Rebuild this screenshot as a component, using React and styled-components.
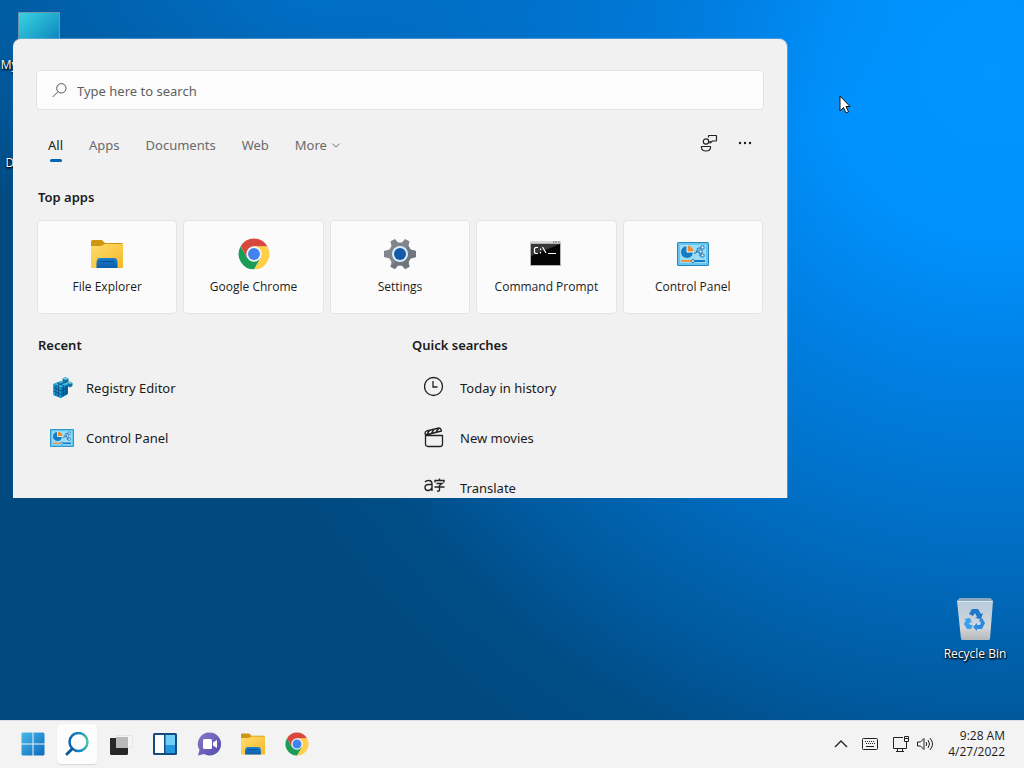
import React, { useState } from "react";
import styled, { createGlobalStyle } from "styled-components";

const GlobalStyle = createGlobalStyle`
  * {
    box-sizing: border-box;
  }

  body {
    margin: 0;
    overflow: hidden;
    font-family: "Noto Sans", "Open Sans", sans-serif;
    font-size: 13px;
    line-height: 20px;
    color: #1b1b1b;
  }

  button {
    margin: 0;
    padding: 0;
    border: 0;
    background: none;
    font: inherit;
    color: inherit;
    cursor: default;
  }

  svg {
    display: block;
    flex: none;
  }
`;

const smallFont = `"Open Sans", "Noto Sans", sans-serif`;

const Screen = styled.div`
  display: flex;
  flex-direction: column;
  min-height: 100vh;
`;

const Desktop = styled.main`
  position: relative;
  flex: 1;
  overflow: hidden;
  background:
    radial-gradient(
      ellipse 60% 32% at 30% 0%,
      rgba(0, 116, 208, 0.85),
      rgba(0, 116, 208, 0)
    ),
    radial-gradient(
      ellipse 92% 130% at 97% 10%,
      #0095ff 0%,
      #0091fc 18%,
      #007fe2 33%,
      #0073cb 46%,
      #0065b3 58%,
      #005a9e 68%,
      #004d86 78%,
      #004a80 86%
    );
`;

const Shortcut = styled.button`
  position: absolute;
  left: ${(p) => p.$left};
  right: ${(p) => p.$right};
  top: ${(p) => p.$top};
  display: flex;
  flex-direction: column;
  align-items: center;
  gap: 3px;
  width: 80px;
  font-family: ${smallFont};
  font-size: 12px;
  color: #fff;
  text-shadow: 1px 1px 2px #000, 0 1px 2px #000;
  white-space: nowrap;
`;

const Pointer = styled.svg`
  position: absolute;
  left: 839px;
  top: 95px;
`;

const SearchWindow = styled.section`
  position: absolute;
  left: 13px;
  top: 39px;
  width: min(774px, calc(100% - 26px));
  max-height: 459px;
  padding: 31px 23px 0;
  overflow: hidden;
  background: #f1f1f1;
  border-radius: 8px 8px 0 0;
  box-shadow: 0 -1px 1px rgba(150, 185, 220, 0.5), 1px 0 0 rgba(150, 185, 220, 0.5);
`;

const SearchBox = styled.label`
  display: flex;
  align-items: center;
  gap: 10px;
  height: 40px;
  padding: 0 15px;
  background: #fcfcfc;
  border: 1px solid #e2e2e2;
  border-radius: 4px;

  input {
    flex: 1;
    padding: 2px 0 0;
    border: 0;
    outline: 0;
    background: none;
    font: inherit;
  }

  input::placeholder {
    color: #5f5f5f;
    opacity: 1;
  }
`;

const Toolbar = styled.div`
  display: flex;
  align-items: center;
  justify-content: space-between;
  height: 54px;
  margin-top: 8px;
  padding: 0 9px 0 12px;
`;

const Tabs = styled.nav`
  display: flex;
  gap: 26px;
`;

const Tab = styled.button`
  display: flex;
  flex-direction: column;
  align-items: center;
  gap: 4px;
  padding-top: 7px;
  color: ${(p) => (p.$active ? "#1b1b1b" : "#6a6a6a")};

  span {
    display: flex;
    align-items: center;
    gap: 4px;
  }

  &::after {
    content: "";
    width: 12px;
    height: 3px;
    border-radius: 2px;
    background: ${(p) => (p.$active ? "#0067b8" : "transparent")};
  }
`;

const Actions = styled.div`
  display: flex;
  align-items: center;
  gap: 16px;
  padding-bottom: 4px;
`;

const Heading = styled.h2`
  margin: 0;
  padding-left: 1px;
  font-size: 13px;
  line-height: 20px;
  font-weight: 600;
`;

const TopApps = styled.section`
  padding: 15px 1px 0;
`;

const Cards = styled.div`
  display: grid;
  grid-template-columns: repeat(5, 1fr);
  gap: 6px;
  margin-top: 13px;
`;

const Card = styled.button`
  display: flex;
  flex-direction: column;
  align-items: center;
  gap: 7px;
  height: 94px;
  padding-top: 17px;
  font-family: ${smallFont};
  font-size: 12px;
  background: #fbfbfb;
  border: 1px solid #e4e4e4;
  border-radius: 4px;
`;

const Columns = styled.div`
  display: grid;
  grid-template-columns: 1fr 1fr;
  gap: 22px;
  padding: 21px 1px 0;
`;

const List = styled.div`
  display: flex;
  flex-direction: column;
  gap: 10px;
  padding: 13px 13px 10px;
`;

const ListRow = styled.button`
  display: flex;
  align-items: center;
  gap: 12px;
  height: 40px;
  text-align: left;
`;

const Taskbar = styled.footer`
  display: flex;
  align-items: center;
  justify-content: space-between;
  height: 48px;
  padding: 0 19px 2px 13px;
  background: #f3f3f3;
  border-top: 1px solid #d9e0e8;
`;

const TaskGroup = styled.div`
  display: flex;
  align-items: center;
  gap: 4px;
`;

const TaskButton = styled.button`
  display: grid;
  place-items: center;
  width: 40px;
  height: 40px;
  border-radius: 4px;
  background: ${(p) => (p.$active ? "#fdfdfd" : "none")};
  box-shadow: ${(p) => (p.$active ? "0 1px 1px #d8d8d8" : "none")};
`;

const Tray = styled.div`
  display: flex;
  align-items: center;
  gap: 14px;
`;

const TrayPair = styled.button`
  display: flex;
  gap: 6px;
`;

const Clock = styled.button`
  font-family: ${smallFont};
  font-size: 12px;
  line-height: 16px;
  text-align: right;
`;

function FolderIcon({ size }) {
  return (
    <svg width={size} height={size} viewBox="0 0 32 32" aria-hidden="true">
      <defs>
        <linearGradient id={`folder${size}`} x1="0" y1="0" x2="1" y2="1">
          <stop offset="0" stopColor="#ffdc6e" />
          <stop offset="1" stopColor="#f4b928" />
        </linearGradient>
        <linearGradient id={`pocket${size}`} x1="0" y1="0" x2="0" y2="1">
          <stop offset="0" stopColor="#1a7fd0" />
          <stop offset="1" stopColor="#0c5ca8" />
        </linearGradient>
      </defs>
      <path d="M0 3.500Q0 2 1.500 2H11l3 3h16.500Q32 5 32 6.500V14H0z" fill="#cf960f" />
      <path d="M0 8h9.500q1.500 0 2.500-1t2.500-1H32v24H0z" fill={`url(#folder${size})`} />
      <path d="M5.500 30v-5q0-5 3.500-5h14q3.500 0 3.500 5v5z" fill={`url(#pocket${size})`} />
      <path d="M9 23.500h14" stroke="#0a4f93" strokeWidth="1.200" />
    </svg>
  );
}

function ChromeIcon({ size }) {
  return (
    <svg width={size} height={size} viewBox="-1 -1 50 50" aria-hidden="true">
      <path d="M24 12h20.8A24 24 0 0 1 24 48l10.400-18z" fill="#ffcf48" />
      <path d="M13.600 30 3.200 12A24 24 0 0 0 24 48l10.400-18z" fill="#1a9b57" />
      <path d="M3.200 12 13.600 30 24 12h20.800A24 24 0 0 0 3.200 12z" fill="#d9483c" />
      <circle cx="24" cy="24" r="12" fill="#f5f5f5" />
      <circle cx="24" cy="24" r="9.300" fill="#4383ef" />
    </svg>
  );
}

function SettingsIcon() {
  return (
    <svg width="32" height="32" viewBox="0 0 32 32" aria-hidden="true">
      <path
        d="M11 1 14 4.500h4L21 1l4.500 2.300L24.500 8l2 3.500L32 13v6l-5.500 1.500-2 3.500 1 4.700L21 31l-3-3.500h-4L11 31l-4.500-2.300 1-4.700-2-3.500L0 19v-6l5.500-1.500 2-3.500-1-4.700z"
        fill="#81868c"
      />
      <path d="M24.500 8l2 3.500L32 13v6l-5.500 1.500-2 3.500 1 4.700L21 31l-3-3.500h-4L11 31l-4.500-2.300z" fill="#70767d" />
      <circle cx="16" cy="16" r="8" fill="#d9ecfb" />
      <circle cx="16" cy="16" r="6" fill="#1458a8" />
    </svg>
  );
}

function CommandIcon() {
  return (
    <svg width="32" height="32" viewBox="0 0 32 32" aria-hidden="true">
      <path d="M0 3h31v25H0z" fill="#b3b3b3" />
      <path d="M1 6h29v21H1z" fill="#050505" />
      <path d="M1 6h29L1 18z" fill="#383838" />
      <path d="M0 3h31v2H0z" fill="#d7d7d7" />
      <path d="M23 4h1.500m1 0H27m1 0h1.500" stroke="#555" />
      <path d="M8 9.500H5.500l-1 1v4l1 1H8M10.500 10.500V12m0 2v1.500M12.500 9l3.500 6M18 15.500h8" fill="none" stroke="#fff" strokeWidth="1.200" />
    </svg>
  );
}

function ControlPanelIcon({ size }) {
  return (
    <svg width={size} height={size} viewBox="0 0 32 32" aria-hidden="true">
      <rect y="4" width="32" height="24" rx="1.500" fill="#2688bf" />
      <rect x="1" y="5" width="30" height="22" rx="1" fill="#62c6ee" />
      <rect x="3" y="7" width="26" height="18" fill="#9bddf6" />
      <circle cx="10" cy="14" r="6" fill="#147bc4" />
      <path d="M10 14V7.500A6.500 6.500 0 0 1 16.500 14z" fill="#f28b28" />
      <path d="M10 7v7h7" fill="none" stroke="#fff" />
      <path d="M17 15h2l2-5h3m-4 4h3v4h3" fill="none" stroke="#176db0" />
      <path d="M24 8h3v3h-3zm-2 4h3v3h-3zm2 4h3v3h-3z" fill="#edfaff" stroke="#2879bd" />
      <path d="M4 23h10" stroke="#ed9943" strokeWidth="2" />
      <path d="M17 23h11" stroke="#1679c5" strokeWidth="2" />
      <circle cx="16" cy="23" r="1.500" fill="#fff" stroke="#1679c5" />
    </svg>
  );
}

function RegistryIcon() {
  return (
    <svg width="24" height="24" viewBox="0 0 24 24" aria-hidden="true">
      <path d="M3.500 8 11 5l7 3.500V18l-7 4-7.500-3z" fill="#0874b1" />
      <path d="M3.500 8 11 5l7 3.500-7 3z" fill="#3db4dd" />
      <path d="M3.500 8 11 11.500V22l-7.500-3z" fill="#149ad2" />
      <path d="M6 9v11m2.500-10v11M13.500 10.500V20M16 9.500V19M3.500 11.500l7.500 3.500 7-3.500M3.500 15l7.500 3.500 7-3.500M7 6.500l7 3.500M14.500 6.500 7.500 9.500" fill="none" stroke="#064c80" strokeWidth=".9" />
      <path d="m12.500 2.500 3-1.500 3 1.500V6l-3 1.500-3-1.500zM17.500 6.500l2.500-1 2.500 1.500v3L20 11.500l-2.500-1.500z" fill="#11769f" />
      <path d="m12.500 2.500 3-1.500 3 1.500L15.500 4zM17.500 6.500l2.500-1 2.500 1.500L20 8z" fill="#6fcfe4" />
    </svg>
  );
}

function SearchIcon({ size, gradient }) {
  return (
    <svg width={size} height={size} viewBox="0 0 24 24" fill="none" aria-hidden="true">
      {gradient && (
        <defs>
          <linearGradient id="searchRing" gradientUnits="userSpaceOnUse" x1="5" y1="9" x2="23" y2="8">
            <stop stopColor="#0b66ad" />
            <stop offset=".6" stopColor="#158cc5" />
            <stop offset="1" stopColor="#4ccb9a" />
          </linearGradient>
        </defs>
      )}
      <circle
        cx={gradient ? 13.5 : 15}
        cy={gradient ? 10 : 8.5}
        r={gradient ? 9 : 7.5}
        stroke={gradient ? "url(#searchRing)" : "#555"}
        strokeWidth={gradient ? 2.5 : 1.6}
      />
      <path
        d={gradient ? "M7 17l-5 5" : "M9.500 14 1.500 22"}
        stroke={gradient ? "#0c5c9c" : "#555"}
        strokeWidth={gradient ? 3 : 1.6}
        strokeLinecap="round"
      />
    </svg>
  );
}

function FeedbackIcon() {
  return (
    <svg width="20" height="20" viewBox="0 0 20 20" fill="none" stroke="#222" strokeWidth="1.200" aria-hidden="true">
      <circle cx="7" cy="8.500" r="2.700" />
      <path d="M2.500 13.500h9v1q0 3.500-4.500 3.500t-4.500-3.500z" strokeLinejoin="round" />
      <path d="M9.500 4.500V3q0-.5.5-.5h7q.5 0 .5.500v4.500q0 .5-.5.500h-3.500L11 10V8" strokeLinejoin="round" />
    </svg>
  );
}

function MoreIcon() {
  return (
    <svg width="20" height="20" viewBox="0 0 20 20" fill="#1b1b1b" aria-hidden="true">
      <circle cx="5" cy="10" r="1.200" />
      <circle cx="10" cy="10" r="1.200" />
      <circle cx="15" cy="10" r="1.200" />
    </svg>
  );
}

function HistoryIcon() {
  return (
    <svg width="24" height="24" viewBox="0 0 24 24" fill="none" stroke="#222" strokeWidth="1.300" aria-hidden="true">
      <circle cx="9.500" cy="10.500" r="9" />
      <path d="M9 5v6h4.500" />
    </svg>
  );
}

function MoviesIcon() {
  return (
    <svg width="24" height="24" viewBox="0 0 24 24" fill="none" stroke="#222" strokeWidth="1.300" strokeLinejoin="round" aria-hidden="true">
      <path d="M1.500 9.500h17V18q0 2.500-2.500 2.500H4q-2.500 0-2.500-2.500zM1.500 9 1 7q0-1.500 1.500-2L15 2q1.500 0 2 1.500l.5 1.500zM3 8l3-4M7.500 7l3-4.200M12 6l3-4" />
    </svg>
  );
}

function TranslateIcon() {
  return (
    <svg width="24" height="24" viewBox="0 0 24 24" fill="none" stroke="#222" strokeWidth="1.400" aria-hidden="true">
      <path d="M1 6q1-1.500 3.500-1.500Q8 4.500 8 8v7M8 8.500H4.500Q1 8.500 1 11.500T4 14.500q3 0 4-3" />
      <path d="M11 6.500v-2h9v2M15.500 2.500v2M12.500 7.500H18l-2.500 2v4.500q0 1.500-2.500 1M10.500 11h10" />
    </svg>
  );
}

function StartIcon() {
  return (
    <svg width="24" height="24" viewBox="0 0 24 24" aria-hidden="true">
      <defs>
        <linearGradient id="startTiles" gradientUnits="userSpaceOnUse" x1="0" y1="0" x2="24" y2="24">
          <stop stopColor="#4abbea" />
          <stop offset="1" stopColor="#0868bd" />
        </linearGradient>
      </defs>
      <path d="M2 .5h9.500v11H.5V2Q.5.500 2 .5zM12.500.5H22q1.500 0 1.500 1.500v9.500h-11zM.5 12.500h11v11H2Q.5 23.500.5 22zM12.500 12.500h11V22q0 1.500-1.500 1.500h-9.500z" fill="url(#startTiles)" />
    </svg>
  );
}

function TaskViewIcon() {
  return (
    <svg width="26" height="24" viewBox="0 0 26 24" aria-hidden="true">
      <rect x="7.500" y="3.500" width="17" height="12" rx="1" fill="#f5f5f5" stroke="#e6e6e6" />
      <rect x="2" y="5" width="18" height="18" rx="1.500" fill="#272727" />
      <path d="M2 5h6v-1h12v2H2z" fill="#f3f3f3" />
      <path d="M8 5h12v11H8z" fill="#b9b9b9" />
    </svg>
  );
}

function WidgetsIcon() {
  return (
    <svg width="26" height="24" viewBox="0 0 26 24" aria-hidden="true">
      <rect x="1" y="1" width="24" height="22" rx="1.500" fill="#134c80" />
      <path d="M3 3h9v18H3z" fill="#fbfdff" />
      <path d="M13.500 3H23v10h-9.500z" fill="#70cef7" />
      <path d="M13.500 13H23v8h-9.500z" fill="#2497e0" />
    </svg>
  );
}

function ChatIcon() {
  return (
    <svg width="24" height="24" viewBox="0 0 24 24" aria-hidden="true">
      <defs>
        <linearGradient id="chatBubble" x1="0" y1="0" x2="1" y2="1">
          <stop stopColor="#8a78c8" />
          <stop offset="1" stopColor="#514caf" />
        </linearGradient>
      </defs>
      <path d="M12.500.5A11.500 11.500 0 1 1 7 22L1 23.500 2.500 18A11.500 11.500 0 0 1 12.500.5z" fill="url(#chatBubble)" />
      <rect x="6" y="7" width="9" height="10" rx="1.500" fill="#fff" />
      <path d="M16 10.500 20 8v8l-4-2.500z" fill="#fff" />
    </svg>
  );
}

function RecycleIcon() {
  return (
    <svg width="40" height="44" viewBox="0 0 40 44" aria-hidden="true">
      <defs>
        <linearGradient id="bin" x1="0" y1="0" x2="0" y2="1">
          <stop stopColor="#b4c9dc" />
          <stop offset=".7" stopColor="#d3d7db" />
          <stop offset="1" stopColor="#b5b7ba" />
        </linearGradient>
      </defs>
      <path d="M2 4 5 1h30l3 3-3 38q0 1-2 1H8q-2 0-2-1z" fill="url(#bin)" />
      <path d="M2 4 5 1h30l3 3-2 1H4z" fill="#8ba6bd" />
      <path d="M2.500 4.500h35" stroke="#dce8f2" />
      <path d="m14 17 3-5h6l3 5 2-1-2 6-6-1 2-1-2-4-2 3z" fill="#1d78c9" />
      <path d="m27 21 3 5-3 6h-5v2l-4-4 4-4v2h3l1-2-2-3z" fill="#2a8be0" />
      <path d="M16 32h-4l-3-5 2-4-2-1 6-1 2 5-2-1-1 2 2 1h2z" fill="#3aa0ee" />
    </svg>
  );
}

function MonitorIcon() {
  return (
    <svg width="42" height="40" viewBox="0 0 42 40" aria-hidden="true">
      <defs>
        <linearGradient id="monitor" x1="0" y1="0" x2="1" y2="1">
          <stop stopColor="#38d5e2" />
          <stop offset="1" stopColor="#087db9" />
        </linearGradient>
      </defs>
      <path d="M.5.500h41v34H.5z" fill="url(#monitor)" stroke="#6f97ac" />
    </svg>
  );
}

function DriveIcon() {
  return (
    <svg width="42" height="40" viewBox="0 0 42 40" aria-hidden="true">
      <path d="M14 8h24v28H14z" fill="#6fb6e0" />
    </svg>
  );
}

function ChevronIcon({ up }) {
  return (
    <svg width={up ? 14 : 10} height={up ? 14 : 10} viewBox="0 0 14 14" fill="none" stroke={up ? "#222" : "#777"} strokeWidth="1.400" aria-hidden="true">
      <path d={up ? "m1 10 6-6 6 6" : "m2 5 5 5 5-5"} />
    </svg>
  );
}

function KeyboardIcon() {
  return (
    <svg width="16" height="12" viewBox="0 0 16 12" fill="none" stroke="#222" aria-hidden="true">
      <rect x=".5" y=".5" width="15" height="11" rx="1" />
      <path d="M3 3.500h10M4 5.500h9" strokeDasharray="1 1" />
      <path d="M4 8.500h8" />
    </svg>
  );
}

function NetworkIcon() {
  return (
    <svg width="18" height="18" viewBox="0 0 18 18" fill="none" stroke="#222" aria-hidden="true">
      <path d="M11 2.500H1.500v11h13V8M5.500 13.500v3m5-3v3M4 16.500h8" />
      <path d="M12.500 1.500h4v5h-4zM14.500 6.500v3M12.500 3.500h4" />
    </svg>
  );
}

function VolumeIcon() {
  return (
    <svg width="18" height="18" viewBox="0 0 18 18" fill="none" stroke="#222" aria-hidden="true">
      <path d="M1.500 7v4h3L8 14.500v-11L4.500 7z" strokeLinejoin="round" />
      <path d="M10 7q1.500 2 0 4M12 5q3 4 0 8M14 3q5 6 0 12" />
    </svg>
  );
}

const tabs = ["All", "Apps", "Documents", "Web", "More"];

const topApps = [
  { name: "File Explorer", icon: <FolderIcon size={32} /> },
  { name: "Google Chrome", icon: <ChromeIcon size={32} /> },
  { name: "Settings", icon: <SettingsIcon /> },
  { name: "Command Prompt", icon: <CommandIcon /> },
  { name: "Control Panel", icon: <ControlPanelIcon size={32} /> },
];

const recent = [
  { name: "Registry Editor", icon: <RegistryIcon /> },
  { name: "Control Panel", icon: <ControlPanelIcon size={24} /> },
];

const quickSearches = [
  { name: "Today in history", icon: <HistoryIcon /> },
  { name: "New movies", icon: <MoviesIcon /> },
  { name: "Translate", icon: <TranslateIcon /> },
];

const pinned = [
  { name: "Start", icon: <StartIcon /> },
  { name: "Search", icon: <SearchIcon size={24} gradient />, active: true },
  { name: "Task view", icon: <TaskViewIcon /> },
  { name: "Widgets", icon: <WidgetsIcon /> },
  { name: "Chat", icon: <ChatIcon /> },
  { name: "File Explorer", icon: <FolderIcon size={24} /> },
  { name: "Google Chrome", icon: <ChromeIcon size={24} /> },
];

function ResultList({ title, items }) {
  return (
    <section>
      <Heading>{title}</Heading>
      <List>
        {items.map((item) => (
          <ListRow key={item.name}>
            {item.icon}
            {item.name}
          </ListRow>
        ))}
      </List>
    </section>
  );
}

export default function App() {
  const [tab, setTab] = useState("All");
  const [query, setQuery] = useState("");

  return (
    <Screen>
      <GlobalStyle />
      <Desktop>
        <Shortcut $left="-1px" $top="12px">
          <MonitorIcon />
          My Computer
        </Shortcut>
        <Shortcut $left="-1px" $top="110px">
          <DriveIcon />
          Data Center
        </Shortcut>
        <Shortcut $right="9px" $top="597px">
          <RecycleIcon />
          Recycle Bin
        </Shortcut>

        <SearchWindow aria-label="Search">
          <SearchBox>
            <SearchIcon size={15} />
            <input
              type="text"
              aria-label="Search"
              placeholder="Type here to search"
              value={query}
              onChange={(e) => setQuery(e.target.value)}
            />
          </SearchBox>

          <Toolbar>
            <Tabs>
              {tabs.map((name) => (
                <Tab key={name} $active={tab === name} onClick={() => setTab(name)}>
                  <span>
                    {name}
                    {name === "More" && <ChevronIcon />}
                  </span>
                </Tab>
              ))}
            </Tabs>
            <Actions>
              <button aria-label="Feedback">
                <FeedbackIcon />
              </button>
              <button aria-label="Options">
                <MoreIcon />
              </button>
            </Actions>
          </Toolbar>

          <TopApps>
            <Heading>Top apps</Heading>
            <Cards>
              {topApps.map((app) => (
                <Card key={app.name}>
                  {app.icon}
                  {app.name}
                </Card>
              ))}
            </Cards>
          </TopApps>

          <Columns>
            <ResultList title="Recent" items={recent} />
            <ResultList title="Quick searches" items={quickSearches} />
          </Columns>
        </SearchWindow>

        <Pointer width="12" height="20" viewBox="0 0 12 20" aria-hidden="true">
          <path d="M1 1v15l3.500-3.500L7 18l2.500-1-2.500-5.500H11z" fill="#fff" stroke="#111" />
        </Pointer>
      </Desktop>

      <Taskbar>
        <TaskGroup>
          {pinned.map((item) => (
            <TaskButton key={item.name} aria-label={item.name} $active={item.active}>
              {item.icon}
            </TaskButton>
          ))}
        </TaskGroup>
        <Tray>
          <button aria-label="Show hidden icons">
            <ChevronIcon up />
          </button>
          <button aria-label="Touch keyboard">
            <KeyboardIcon />
          </button>
          <TrayPair aria-label="Network and volume">
            <NetworkIcon />
            <VolumeIcon />
          </TrayPair>
          <Clock>
            9:28 AM
            <br />
            4/27/2022
          </Clock>
        </Tray>
      </Taskbar>
    </Screen>
  );
}
